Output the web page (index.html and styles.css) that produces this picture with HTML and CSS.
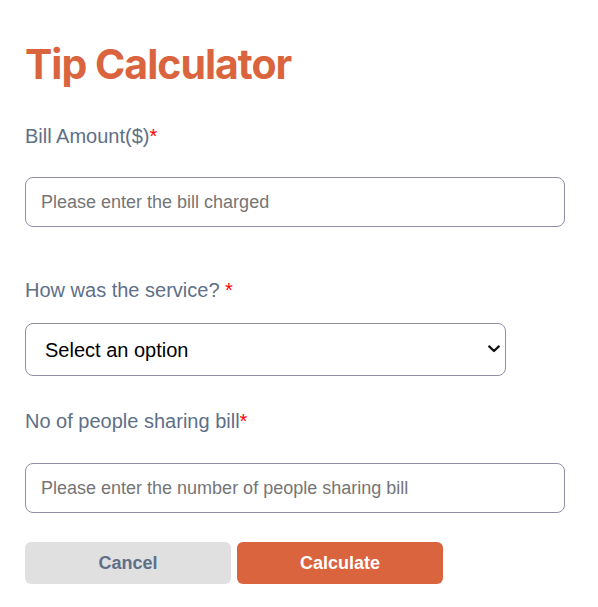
FILE: index.html
```html
<!DOCTYPE html>
<html lang="en">
<head>
<meta charset="utf-8">
<title>Tip Calculator</title>
<link rel="stylesheet" href="styles.css">
</head>
<body>
<main class="calc">
  <h1 class="calc-title">Tip Calculator</h1>
  <form class="calc-form">
    <div class="field field-bill">
      <label class="field-label" for="bill">Bill Amount($)<span class="req">*</span></label>
      <input class="field-input" id="bill" type="text" placeholder="Please enter the bill charged">
    </div>
    <div class="field field-service">
      <label class="field-label" for="service">How was the service? <span class="req">*</span></label>
      <div class="select-wrap">
        <select class="field-select" id="service">
          <option>Select an option</option>
          <option>Excellent (30%)</option>
          <option>Good (20%)</option>
          <option>Okay (15%)</option>
          <option>Bad (10%)</option>
        </select>
        <svg class="select-arrow" width="12" height="8" viewBox="0 0 12 8" aria-hidden="true">
          <path d="M1.2 1.4 L6 6 L10.8 1.4" fill="none" stroke="#111" stroke-width="2.2" stroke-linecap="round" stroke-linejoin="round"/>
        </svg>
      </div>
    </div>
    <div class="field field-people">
      <label class="field-label" for="people">No of people sharing bill<span class="req">*</span></label>
      <input class="field-input" id="people" type="text" placeholder="Please enter the number of people sharing bill">
    </div>
    <div class="actions">
      <button type="button" class="btn btn-cancel">Cancel</button>
      <button type="button" class="btn btn-calc">Calculate</button>
    </div>
  </form>
</main>
</body>
</html>
```

FILE: styles.css
```css
* { box-sizing: border-box; }

html, body {
  margin: 0;
  padding: 0;
  background: #ffffff;
}

body {
  font-family: "Liberation Sans", Arial, sans-serif;
}

.calc {
  padding: 40px 25px 0 25px;
  width: 590px;
}

.calc-title {
  margin: 0;
  font-family: Inter, "Liberation Sans", sans-serif;
  font-weight: 700;
  font-size: 41px;
  line-height: 49px;
  color: #d9643e;
  letter-spacing: -1px;
}

.calc-form {
  display: flex;
  flex-direction: column;
}

.field {
  display: flex;
  flex-direction: column;
  align-items: flex-start;
}

.field-bill { margin-top: 36px; }
.field-service { margin-top: 52px; }
.field-people { margin-top: 34px; }

.field-label {
  font-size: 20px;
  line-height: 23px;
  color: #5e6f88;
}

.field-bill .field-label { margin-bottom: 29px; }
.field-service .field-label { margin-bottom: 21px; }
.field-people .field-label { margin-bottom: 30px; }

.req {
  color: #ff0000;
}

.field-input {
  width: 540px;
  height: 50px;
  border: 1px solid #918ea6;
  border-radius: 8px;
  padding: 0 15px;
  font-family: "Liberation Sans", Arial, sans-serif;
  font-size: 18px;
  color: #222;
  background: #fff;
  outline: none;
}

.field-input::placeholder {
  color: #757575;
}

.select-wrap {
  position: relative;
  width: 481px;
  height: 53px;
}

.field-select {
  -webkit-appearance: none;
  appearance: none;
  width: 100%;
  height: 100%;
  border: 1px solid #918ea6;
  border-radius: 8px;
  padding: 0 30px 0 19px;
  font-family: "Liberation Sans", Arial, sans-serif;
  font-size: 20px;
  color: #000;
  background: #fff;
}

.select-arrow {
  position: absolute;
  right: 6px;
  top: 22px;
  pointer-events: none;
}

.actions {
  display: flex;
  gap: 6px;
  margin-top: 29px;
}

.btn {
  width: 206px;
  height: 42px;
  border: none;
  border-radius: 6px;
  font-family: "Liberation Sans", Arial, sans-serif;
  font-weight: 700;
  font-size: 18px;
  cursor: pointer;
}

.btn-cancel {
  background: #e0e0e0;
  color: #5e6f88;
}

.btn-calc {
  background: #d9643e;
  color: #ffffff;
}
```
